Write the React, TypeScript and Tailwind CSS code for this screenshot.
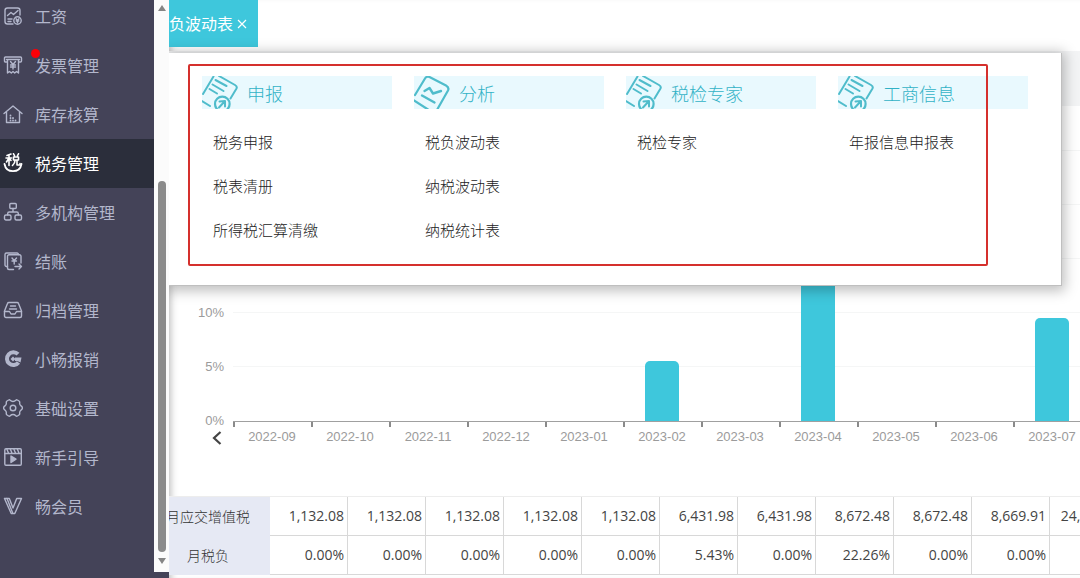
import type { ReactNode } from 'react';
import { clsx } from 'clsx';

type NavItem = { label: string; icon: ReactNode; active?: boolean; badge?: boolean };

const NAV: NavItem[] = [
  {
    label: '工资',
    icon: (
      <>
        <path d="M10 18H4.500a2.500 2.500 0 0 1-2.500-2.500v-11A2.500 2.500 0 0 1 4.500 2h10A2.500 2.500 0 0 1 17 4.500V9" />
        <path d="M4.500 9.500 8 6.500l2.500 2L15 4.500M5 13h4M5 15.500h3" />
        <circle cx="14.500" cy="14.500" r="3.700" />
        <path d="m13 12.800 1.500 1.700 1.500-1.700M14.500 14.500v2.200M13.200 15h2.600" />
      </>
    ),
  },
  {
    label: '发票管理',
    badge: true,
    icon: (
      <>
        <path d="M4 7H2.500A1 1 0 0 1 1.500 6V3a1 1 0 0 1 1-1h15a1 1 0 0 1 1 1v3a1 1 0 0 1-1 1H16" />
        <path d="M3.500 4.500h13M4.500 4.500V18l2-1.500L8.300 18l1.700-1.500 1.700 1.500 1.800-1.500 2 1.500V4.500" />
        <path d="m7.500 6.500 2.500 3 2.500-3M10 9.500V14M7.500 10h5M7.500 12h5" />
      </>
    ),
  },
  {
    label: '库存核算',
    icon: (
      <>
        <path d="M1 9.500 10 2l9 7.500M3.500 8v10.500h13V8" />
        <path d="M7.500 11.500v.2M7.500 14v.2M10 14v.2M7.500 16.300v.2M10 16.300v.2M12.500 16.300v.2" strokeWidth="1.800" />
      </>
    ),
  },
  {
    label: '税务管理',
    active: true,
    icon: (
      <>
        <path d="M1.500 11c.8 4.500 4.200 7.200 8.500 7.200s7.700-2.700 8.500-7.200" strokeWidth="1.800" />
        <path d="M4 2.500 8 1M3 5h5.500M6 2v10.500M3.500 9l2.500-4 2 2.500M10.500.8l1 1.800M15.500.8l-1 1.800M10.500 4h5v3h-5zM12 7.500c0 2.500-1 3.500-2.500 5M14 7.500v4.500h3V10.500" strokeWidth="1.600" />
      </>
    ),
  },
  {
    label: '多机构管理',
    icon: (
      <>
        <rect x="6.800" y="1.500" width="6.500" height="5" rx="1" />
        <rect x="1.500" y="13" width="6.500" height="5" rx="1.500" />
        <rect x="12" y="13" width="6.500" height="5" rx="1.500" />
        <path d="M10 6.500V10M4.700 13v-1.500A1.500 1.500 0 0 1 6.200 10h7.600a1.500 1.500 0 0 1 1.500 1.500V13" />
      </>
    ),
  },
  {
    label: '结账',
    icon: (
      <>
        <path d="M4.500 15.500h-1A1.500 1.500 0 0 1 2 14V3.500A1.500 1.500 0 0 1 3.500 2H14a1.500 1.500 0 0 1 1.500 1.500" />
        <path d="M10.500 18.500H6A1.500 1.500 0 0 1 4.500 17V5.300A1.500 1.500 0 0 1 6 3.800h10.500A1.500 1.500 0 0 1 18 5.300V12" />
        <path d="m9 7 2.200 2.500L13.500 7M11.200 9.500V13M9 10h4.500M12 15.500h6.500M16 13l2.500 2.500L16 18" />
      </>
    ),
  },
  {
    label: '归档管理',
    icon: (
      <>
        <path d="M1.500 11 4.500 3.500A1.500 1.500 0 0 1 6 2.500h8a1.500 1.500 0 0 1 1.500 1L18.500 11v5a1.500 1.500 0 0 1-1.500 1.500H3A1.500 1.500 0 0 1 1.500 16z" />
        <path d="M1.500 11.500h5L8 14h4l1.500-2.500h5M7.500 6h5M6.500 9h7" />
      </>
    ),
  },
  {
    label: '小畅报销',
    icon: (
      <>
        <path d="M15 5.200A6.400 6.400 0 1 0 15.500 13.500" strokeWidth="4" strokeLinecap="butt" />
        <path d="M10 7.500 12.500 10 10 12.500 7.500 10z" fill="currentColor" stroke="none" />
        <path d="M12 8.500h6.500l-1 5-3-1.500H12z" fill="currentColor" stroke="none" />
      </>
    ),
  },
  {
    label: '基础设置',
    icon: (
      <>
        <path
          d="M7.200 2.200a1.200 1.200 0 0 0-1.600-.2L4 3a1.500 1.500 0 0 0-.7 1.600c.3 1.500-.1 2.400-1.400 3.400a2.200 2.200 0 0 0 0 4c1.300 1 1.700 1.900 1.400 3.400A1.500 1.500 0 0 0 4 17l1.600 1a1.200 1.200 0 0 0 1.600-.2c1.600-1.700 4-1.700 5.600 0a1.200 1.200 0 0 0 1.600.2l1.600-1a1.500 1.500 0 0 0 .7-1.600c-.3-1.500.1-2.400 1.400-3.400a2.200 2.200 0 0 0 0-4c-1.300-1-1.700-1.900-1.400-3.400A1.500 1.500 0 0 0 16 3l-1.600-1a1.200 1.200 0 0 0-1.600.2c-1.600 1.700-4 1.700-5.600 0z"
        />
        <circle cx="10" cy="10" r="2.800" />
      </>
    ),
  },
  {
    label: '新手引导',
    icon: (
      <>
        <rect x="1.800" y="1.800" width="16.500" height="16.500" rx="1.200" />
        <path d="M1.800 6.500h16.500M4 2.500l1.500 3.500M7.500 2.500 9 6M11 2.500l1.500 3.500M14.500 2.500 16 6" />
        <path d="m8 9 5 3.200L8 15.500z" fill="currentColor" />
      </>
    ),
  },
  {
    label: '畅会员',
    icon: (
      <>
        <path d="M1.500 2.500h4.800L10 12l3.700-9.500h4.800L11.800 17.500H8.200z" />
        <path d="m4 2.500 5.500 14" />
      </>
    ),
  },
];

const MENU = [
  { title: '申报', icon: 'doc', items: ['税务申报', '税表清册', '所得税汇算清缴'] },
  { title: '分析', icon: 'trend', items: ['税负波动表', '纳税波动表', '纳税统计表'] },
  { title: '税检专家', icon: 'doc', items: ['税检专家'] },
  { title: '工商信息', icon: 'doc', items: ['年报信息申报表'] },
];

const MONTHS = [
  { month: '2022-09', tax: '1,132.08', rate: '0.00%', bar: 0 },
  { month: '2022-10', tax: '1,132.08', rate: '0.00%', bar: 0 },
  { month: '2022-11', tax: '1,132.08', rate: '0.00%', bar: 0 },
  { month: '2022-12', tax: '1,132.08', rate: '0.00%', bar: 0 },
  { month: '2023-01', tax: '1,132.08', rate: '0.00%', bar: 0 },
  { month: '2023-02', tax: '6,431.98', rate: '5.43%', bar: 60 },
  { month: '2023-03', tax: '6,431.98', rate: '0.00%', bar: 0 },
  { month: '2023-04', tax: '8,672.48', rate: '22.26%', bar: 245 },
  { month: '2023-05', tax: '8,672.48', rate: '0.00%', bar: 0 },
  { month: '2023-06', tax: '8,669.91', rate: '0.00%', bar: 0 },
  { month: '2023-07', tax: '24,310.56', rate: '9.45%', bar: 103 },
];

// labels sit on the lowest grid lines, the open menu covers the rest
const TICKS = ['10%', '5%', '0%'];
const GRID_LINES = 5;

function NavIcon({ children }: { children: ReactNode }) {
  return (
    <svg
      viewBox="0 0 20 20"
      className="size-5 shrink-0"
      fill="none"
      stroke="currentColor"
      strokeWidth="1.400"
      strokeLinecap="round"
      strokeLinejoin="round"
      aria-hidden="true"
    >
      {children}
    </svg>
  );
}

function MenuIcon({ name }: { name: string }) {
  return (
    <svg
      viewBox="0 0 37 33"
      className="h-[33px] w-[37px] shrink-0"
      fill="none"
      stroke="#4fbccb"
      strokeWidth="2"
      strokeLinecap="round"
      strokeLinejoin="round"
      aria-hidden="true"
    >
      {name === 'trend' ? (
        <>
          <path d="M0 24.500 14 33.500M1 19 11 2.500Q12.500 0 15.500 1L32 9.500Q35.500 11.500 34 14.500L23.500 33" strokeWidth="2.200" />
          <path d="m10.500 15 5-3 3.500 5.500 8-2.500M8 19.500l12.500 7" strokeWidth="2.400" />
        </>
      ) : (
        <>
          <path d="M1 18 11.500.5M17 0l16 9q2.500 1.500 1.500 3.500L28.500 22.500M0 25l8 5" />
          <path d="m13.500 4 11 6M10.500 8.500l11 6.500M7.500 13l7.500 4.500" />
          <circle cx="20.300" cy="28" r="7.300" strokeWidth="2.200" />
          <path d="m17 31.500 6-6.500M17.500 25.500l5.500-.5v5.500" />
        </>
      )}
    </svg>
  );
}

function Sidebar() {
  return (
    <aside className="flex shrink-0 overflow-hidden bg-[#444358]">
      <nav className="-mt-2 w-[154px]">
        {NAV.map(item => (
          <a
            key={item.label}
            href="#"
            className={clsx(
              'flex h-[49px] items-center gap-3 pb-0.5 pl-[3px] text-base',
              item.active ? 'bg-[#2b2e3b] text-white' : 'text-[#b3b7cc]',
            )}
          >
            <NavIcon>{item.icon}</NavIcon>
            <span className="relative">
              {item.label}
              {item.badge && <i className="absolute -top-1 -left-1 size-[9px] rounded-full bg-[#fb0007]" />}
            </span>
          </a>
        ))}
      </nav>
      {/* scroll track */}
      <div className="mb-1.5 flex w-[15px] flex-col items-center justify-between bg-[#fbfbfb] pt-[5px] pb-2">
        <svg viewBox="0 0 8 6" className="h-1.5 w-2 fill-[#858585]" aria-hidden="true"><path d="M4 0 8 6H0z" /></svg>
        <div className="mt-[170px] mb-1.5 w-2 flex-1 rounded-full bg-[#8b8b8b]" />
        <svg viewBox="0 0 8 6" className="h-1.5 w-2 fill-[#858585]" aria-hidden="true"><path d="M0 0h8L4 6z" /></svg>
      </div>
    </aside>
  );
}

function MegaMenu() {
  return (
    <div className="absolute top-[53px] right-[18px] left-0 h-[233px] border-r border-b border-[#bfbfbf] bg-white pt-[23px] pl-[33px] shadow-[0_2px_12px_3px_rgba(0,0,0,0.25)]">
      <div className="flex gap-[22px]">
        {MENU.map(col => (
          <section key={col.title} className="w-[190px]">
            <h2 className="flex h-[33px] items-center gap-2 bg-[#e9f9fe] text-lg leading-none font-light text-[#32b2c6]">
              <MenuIcon name={col.icon} />
              {col.title}
            </h2>
            <ul className="mt-2.5 pl-[11px]">
              {col.items.map(label => (
                <li key={label} className="flex h-11 items-center">
                  <a href="#" className="text-[15px] leading-none font-light text-[#222]">{label}</a>
                </li>
              ))}
            </ul>
          </section>
        ))}
      </div>
      <div className="pointer-events-none absolute top-[11px] left-[19px] h-[202px] w-[800px] rounded-xs border-2 border-[#d5302d]" />
    </div>
  );
}

function RateChart() {
  return (
    <div className="flex pt-11 font-['Liberation_Sans',Arial,sans-serif] text-[13px] text-[#9b9b9b]">
      <div className="flex w-[55px] shrink-0 flex-col items-end justify-end">
        {TICKS.map(tick => (
          <div key={tick} className="h-[54px] leading-4 last-of-type:h-4">
            {tick}
          </div>
        ))}
        <button className="p-0.5" aria-label="更早月份">
          <svg viewBox="0 0 10 14" className="h-3.5 w-2.5" fill="none" stroke="#444" strokeWidth="2.200" aria-hidden="true">
            <path d="M8.500 1 2 7l6.500 6" />
          </svg>
        </button>
      </div>
      <div className="relative ml-[9px] flex-1 overflow-hidden">
        <div className="absolute inset-x-0 top-0 flex flex-col">
          {Array.from({ length: GRID_LINES }).map((_, i) => (
            <div key={i} className="h-[54px] border-t border-[#f5f6f6]" />
          ))}
        </div>
        <div className="relative flex w-max">
          {MONTHS.map(m => (
            <div key={m.month} className="w-[78px] shrink-0">
              <div className="flex h-[272px] items-end justify-center border-b border-[#a0a0a0]">
                {m.bar > 0 && <div className="w-[34px] rounded-t-[5px] bg-[#3ec7dc]" style={{ height: m.bar }} />}
              </div>
              <div className="h-[5px] border-l-2 border-[#8a8a8a]" />
              <div className="text-center leading-5">{m.month}</div>
            </div>
          ))}
        </div>
      </div>
    </div>
  );
}

const HEAD_CELL = 'w-[124px] bg-[#e6e9f4] text-center font-light text-[#333]';
const DATA_CELL = 'w-[78px] border-r border-b border-[#d8d8d8] pr-[3px] text-right';

function RateTable() {
  return (
    <div className="mt-[49px] overflow-hidden">
      <table className="-ml-[23px] w-[982px] table-fixed border-separate border-spacing-0 border-t border-[#ededed] font-['Open_Sans','Noto_Sans_CJK_SC',sans-serif] text-sm text-[#444]">
        <tbody>
          <tr className="h-[39px]">
            <th scope="row" className={HEAD_CELL}>月应交增值税</th>
            {MONTHS.map(m => <td key={m.month} className={DATA_CELL}>{m.tax}</td>)}
          </tr>
          <tr className="h-[39px]">
            <th scope="row" className={HEAD_CELL}>月税负</th>
            {MONTHS.map(m => <td key={m.month} className={DATA_CELL}>{m.rate}</td>)}
          </tr>
        </tbody>
      </table>
    </div>
  );
}

export default function App() {
  return (
    <div className="flex h-screen overflow-hidden bg-white font-['Noto_Sans_CJK_SC',sans-serif]">
      <Sidebar />
      <main className="relative min-w-0 flex-1 overflow-hidden shadow-[inset_7px_0_7px_-5px_rgba(0,0,0,0.25)]">
        <div className="flex h-[51px] items-start">
          <button className="flex h-[47px] w-[89px] items-center gap-1 bg-[#3ec7dc] text-base whitespace-nowrap text-white">
            <span className="pb-0.5">负波动表</span>
            <svg viewBox="0 0 10 10" className="size-2.5 shrink-0" stroke="currentColor" strokeWidth="1.200" aria-hidden="true">
              <path d="m1 1 8 8M9 1 1 9" />
            </svg>
          </button>
        </div>
        <div className="h-[55px] bg-[#f3f4f5]" />
        <RateChart />
        <RateTable />
        <MegaMenu />
      </main>
    </div>
  );
}
